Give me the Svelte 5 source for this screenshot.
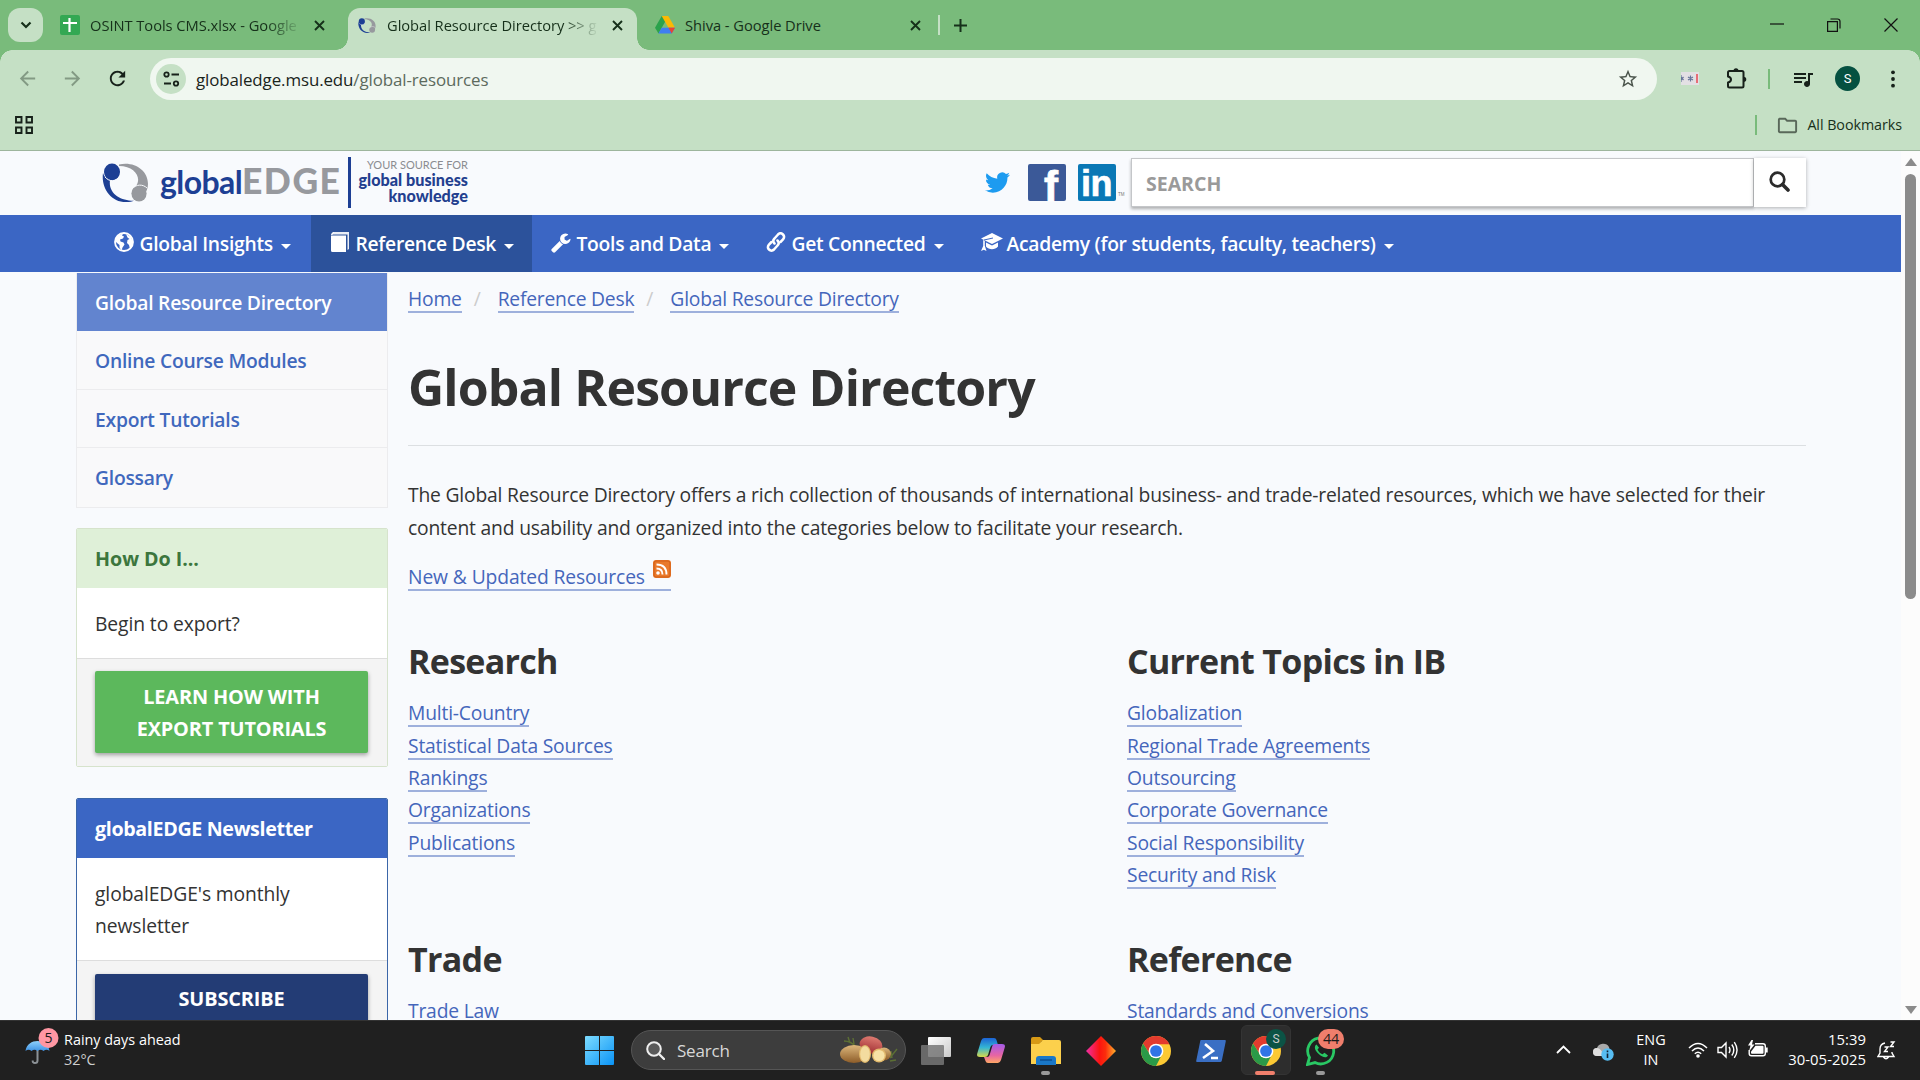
<script>
  const navItems = [
    { label: 'Global Insights', icon: 'globe' },
    { label: 'Reference Desk', icon: 'book', active: true },
    { label: 'Tools and Data', icon: 'wrench' },
    { label: 'Get Connected', icon: 'link' },
    { label: 'Academy (for students, faculty, teachers)', icon: 'cap' }
  ];
  const sideLinks = ['Global Resource Directory', 'Online Course Modules', 'Export Tutorials', 'Glossary'];
  const crumbs = ['Home', 'Reference Desk', 'Global Resource Directory'];
  const sections = [
    { title: 'Research', links: ['Multi-Country', 'Statistical Data Sources', 'Rankings', 'Organizations', 'Publications'] },
    { title: 'Current Topics in IB', links: ['Globalization', 'Regional Trade Agreements', 'Outsourcing', 'Corporate Governance', 'Social Responsibility', 'Security and Risk'] },
    { title: 'Trade', links: ['Trade Law'] },
    { title: 'Reference', links: ['Standards and Conversions'] }
  ];
</script>

{#snippet close()}
  <svg class="x" width="11" height="11" viewBox="0 0 11 11"><path d="M1 1l9 9M10 1l-9 9" stroke="#16301a" stroke-width="1.9" fill="none" /></svg>
{/snippet}

{#snippet rings(w, h)}
  <svg width={w} height={h} viewBox="0 0 47 39">
    <path d="M17 1.500C32 -2 46 7 46 21c0 4-1.500 8-4.500 11-1-4-4-7-7.500-9C40 15 33 3 17 3z" fill="#97999e" />
    <path d="M1 10C-1 24 8 39 24 39c4 0 6-.4 8-1.200C19 38 6 31 8 17 5 16 2 14 1 10z" fill="#1d3f94" />
    <ellipse cx="10" cy="9" rx="8" ry="8.500" fill="#1d3f94" />
    <ellipse cx="37" cy="30.500" rx="7.600" ry="8" fill="#97999e" />
    <path d="M3 14c4 5 11 5 15-1M30 26c4-5 11-5 15-1" fill="none" stroke="#f8fafd" stroke-width="1" />
  </svg>
{/snippet}

{#snippet chrome()}
  <svg width="30" height="30" viewBox="2 2 44 44">
    <circle cx="24" cy="24" r="22" fill="#fcc934" />
    <path d="M24 14h19.600A22 22 0 0 0 4.950 13L15.300 29A10 10 0 0 1 24 14z" fill="#e33b2e" />
    <path d="M4.950 13A22 22 0 0 0 24 46l8.700-17A10 10 0 0 1 15.300 29z" fill="#2a9a48" />
    <circle cx="24" cy="24" r="10.800" fill="#fff" />
    <circle cx="24" cy="24" r="8.600" fill="#2f74e6" />
  </svg>
{/snippet}

{#snippet navIcon(name)}
  {#if name === 'globe'}
    <svg width="20" height="20" viewBox="0 0 20 20"><circle cx="10" cy="10" r="9" fill="none" stroke="#fff" stroke-width="1.800" /><path d="M2 6l3-3 4-1.500-1 2 2 1-1 2-3 1 .5 2 3 1 1 2-2 3-1 3-2-3V13L3 11 1 9zM12 2l5 3 2 5-1 5-2 2-1-4-2-2 .5-3 2-1-2-1.500z" fill="#fff" /></svg>
  {:else if name === 'book'}
    <svg width="20" height="20" viewBox="0 0 20 20"><path d="M3.500 0H19v17l-1.500 1V2.500H2.800z" fill="#fff" opacity=".9" /><path d="M1 3.500h15V20H2.500Q1 20 1 18.500zM1 3Q1.500 0 4 0v1L2.300 3z" fill="#fff" /></svg>
  {:else if name === 'wrench'}
    <svg width="21" height="21" viewBox="60 0 1792 1792"><path fill="#fff" d="M1092 1052l-682 682q-37 37-90 37-52 0-91-37l-106-108q-38-36-38-90 0-53 38-91l681-681q39 98 114.500 173.500t173.500 114.500zm634-435q0 39-23 106-47 134-164.500 217.500t-258.500 83.500q-185 0-316.500-131.500t-131.500-316.500 131.500-316.500 316.500-131.500q58 0 121.500 16.500t107.500 46.500q16 11 16 28t-16 28l-293 169v224l193 107q5-3 79-48.500t135.500-81 70.500-35.500q15 0 23.500 10t8.500 25z" /></svg>
  {:else if name === 'link'}
    <svg width="20" height="20" viewBox="0 0 20 20"><g fill="none" stroke="#fff" stroke-width="2.500" stroke-linecap="round"><path d="M8.500 11.500C6.500 9.500 7 8 8.500 6.500l3.500-4c1.500-1.500 3.500-1.500 5 0s1.300 3.300 0 5L14.500 10" /><path d="M11.500 8.500c2 2 1.500 3.500 0 5l-3.500 4c-1.500 1.500-3.500 1.500-5 0s-1.300-3.300 0-5L5.500 10" /></g></svg>
  {:else}
    <svg width="22" height="20" viewBox="0 0 22 20"><path d="M0 6.500L11 1l11 5.500L11 12z M5 10.500l6 3 6-3v4c-3 3.500-9 3.500-12 0z M2.200 8l1.600.7v5l1.700 5.300-2.700-1.200L0 19l2.200-5z" fill="#fff" /><path d="M3 8l9-2" stroke="#3b66c4" stroke-width="1" /></svg>
  {/if}
{/snippet}

<div class="screen">
  <header class="tabs">
    <div class="chev"><svg width="12" height="8" viewBox="0 0 12 8"><path d="M1.500 1.500L6 6l4.500-4.500" fill="none" stroke="#16301a" stroke-width="2.200" /></svg></div>
    <div class="tab first">
      <svg class="fav" width="20" height="20" viewBox="0 0 20 20"><rect width="20" height="20" rx="2" fill="#33a853" /><path d="M9.500 3v14M3 8h14" stroke="#fff" stroke-width="2.200" /></svg>
      <span class="fade">OSINT Tools CMS.xlsx - Google</span>
      {@render close()}
    </div>
    <div class="tab active">
      <span class="fav">{@render rings(18, 15)}</span>
      <span class="fade">Global Resource Directory &gt;&gt; g</span>
      {@render close()}
    </div>
    <div class="tab third">
      <svg class="fav" width="20" height="18" viewBox="0 0 20 18"><path d="M6.700 0h6.600L10 6 3.500 17.500 0 11.800z" fill="#2ba24c" /><path d="M6.700 0h6.600L20 11.800h-6.500z" fill="#fbb904" /><path d="M3.400 17.500L6.700 11.800H20l-3.300 5.700z" fill="#3f7ef0" /><path d="M13.500 11.800H20l-3.300 5.700z" fill="#e94335" /></svg>
      <span>Shiva - Google Drive</span>
      {@render close()}
    </div>
    <i class="tabsep"></i>
    <svg class="plus" width="13" height="13" viewBox="0 0 13 13"><path d="M6.500 0v13M0 6.500h13" stroke="#16301a" stroke-width="2" /></svg>
    <div class="win">
      <svg width="14" height="14" viewBox="0 0 14 14"><path d="M0 6h14" stroke="#111" stroke-width="1.200" /></svg>
      <svg width="14" height="14" viewBox="0 0 14 14"><path d="M.6 3.600h9.800v9.800H.6zM3.500 1h7q2.500 0 2.500 2.500v7" fill="none" stroke="#111" stroke-width="1.200" /></svg>
      <svg width="14" height="14" viewBox="0 0 14 14"><path d="M.5.5l13 13M13.500.5l-13 13" stroke="#111" stroke-width="1.200" /></svg>
    </div>
  </header>

  <div class="toolbar">
    <svg class="back" width="23" height="23" viewBox="0 0 24 24"><path fill="#839a84" d="M20 11H7.830l5.590-5.590L12 4l-8 8 8 8 1.410-1.410L7.830 13H20v-2z" /></svg>
    <svg class="fwd" width="23" height="23" viewBox="0 0 24 24"><path fill="#839a84" d="M4 11h12.170l-5.590-5.590L12 4l8 8-8 8-1.410-1.410L16.170 13H4v-2z" /></svg>
    <svg class="reload" width="23" height="23" viewBox="0 0 24 24"><path fill="#17211a" d="M17.650 6.350C16.200 4.900 14.210 4 12 4c-4.420 0-7.990 3.580-7.990 8s3.570 8 7.990 8c3.730 0 6.840-2.550 7.730-6h-2.080c-.82 2.330-3.040 4-5.650 4-3.310 0-6-2.690-6-6s2.690-6 6-6c1.660 0 3.140.69 4.220 1.780L13 11h7V4l-2.350 2.350z" /></svg>
    <div class="omnibox">
      <span class="site"><svg width="17" height="16" viewBox="0 0 17 16"><g fill="none" stroke="#17211a" stroke-width="1.800"><circle cx="3.500" cy="3.500" r="2.200" /><path d="M8.500 3.500H16M1 12.500h7" /><circle cx="13" cy="12.500" r="2.200" /></g></svg></span>
      <span class="url">globaledge.msu.edu<em>/global-resources</em></span>
      <svg class="star" width="22" height="22" viewBox="0 0 24 24"><path fill="#4a544b" d="M22 9.240l-7.190-.62L12 2 9.190 8.630 2 9.240l5.460 4.730L5.820 21 12 17.270 18.180 21l-1.630-7.030L22 9.240zM12 15.400l-3.760 2.270 1-4.280-3.320-2.880 4.380-.38L12 6.100l1.710 4.040 4.380.38-3.320 2.880 1 4.280L12 15.400z" /></svg>
    </div>
    <svg class="ext" width="18" height="13" viewBox="0 0 18 13"><rect width="18" height="13" fill="#e3e0e4" /><path d="M0 3v7M0 5l2.500 3M2.500 5L0 8M9.500 3.500v6M7 5l5 3M12 5L7 8" fill="none" stroke="#68769a" stroke-width="1.200" /><path d="M16 2v9" stroke="#e8505b" stroke-width="1.600" /></svg>
    <svg class="puzzle" width="23" height="23" viewBox="0 0 23 23"><path d="M3 5.500Q3 4 4.500 4H17q1.500 0 1.500 1.500V19q0 1.500-1.500 1.500H4.500Q3 20.500 3 19v-3.500q3-.6 3-3t-3-3z" fill="none" stroke="#17211a" stroke-width="2" stroke-linejoin="round" /><path d="M8.500 4a2.500 2.800 0 0 1 5 0zM18.500 9.700a2.800 2.600 0 0 1 0 5.200z" fill="#17211a" /></svg>
    <i class="sep"></i>
    <svg class="music" width="24" height="24" viewBox="0 0 24 24"><path fill="#17211a" d="M15 6H3v2h12V6zm0 4H3v2h12v-2zM3 16h8v-2H3v2zM17 6v8.180c-.31-.11-.65-.18-1-.18-1.660 0-3 1.340-3 3s1.340 3 3 3 3-1.340 3-3V8h3V6h-5z" /></svg>
    <span class="avatar">S</span>
    <svg class="dots" width="4" height="18" viewBox="0 0 4 18"><g fill="#17211a"><circle cx="2" cy="2.300" r="1.900" /><circle cx="2" cy="9" r="1.900" /><circle cx="2" cy="15.700" r="1.900" /></g></svg>
  </div>

  <div class="bookmarks">
    <svg width="18" height="18" viewBox="0 0 18 18"><path d="M1 1h5.500v5.500H1zM11.500 1H17v5.500h-5.500zM1 11.500h5.500V17H1zM11.500 11.500H17V17h-5.500z" fill="none" stroke="#17211a" stroke-width="1.900" /></svg>
    <i class="sep"></i>
    <svg class="folder" width="25" height="23" viewBox="0 0 24 24"><path fill="#59685a" d="M9.170 6l2 2H20v10H4V6h5.170M10 4H4c-1.100 0-1.990.9-1.990 2L2 18c0 1.100.9 2 2 2h16c1.100 0 2-.9 2-2V8c0-1.100-.9-2-2-2h-8l-2-2z" /></svg>
    <span>All Bookmarks</span>
  </div>

  <div class="viewport">
    <div class="page">
      <div class="brandbar">
        <span class="logo-mark">{@render rings(47, 39)}</span>
        <div class="logo-text">global<b>EDGE</b></div>
        <div class="tagline"><small>YOUR SOURCE FOR</small><strong>global business</strong><strong>knowledge</strong></div>
        <div class="social">
          <svg class="tw" width="25" height="25" viewBox="0 0 24 24"><path fill="#1d9bf0" d="M23.953 4.570a10 10 0 01-2.825.775 4.958 4.958 0 002.163-2.723c-.951.555-2.005.959-3.127 1.184a4.920 4.920 0 00-8.384 4.482C7.690 8.095 4.067 6.130 1.640 3.162a4.822 4.822 0 00-.666 2.475c0 1.710.87 3.213 2.188 4.096a4.904 4.904 0 01-2.228-.616v.06a4.923 4.923 0 003.946 4.827 4.996 4.996 0 01-2.212.085 4.936 4.936 0 004.604 3.417 9.867 9.867 0 01-6.102 2.105c-.39 0-.779-.023-1.170-.067a13.995 13.995 0 007.557 2.209c9.053 0 13.998-7.496 13.998-13.985 0-.21 0-.42-.015-.63A9.935 9.935 0 0024 4.590z" /></svg>
          <svg class="fb" width="38" height="37" viewBox="0 0 38 37"><rect width="38" height="37" rx="2" fill="#3b5998" /><text x="16" y="36.600" font-size="42" font-weight="700" font-family="Liberation Sans, sans-serif" fill="#fff" stroke="#fff" stroke-width=".8">f</text></svg>
          <svg class="li" width="48" height="37" viewBox="0 0 48 37"><rect width="38" height="37" rx="2" fill="#0a78b5" /><text x="3" y="32" font-size="36" font-weight="700" font-family="Liberation Sans, sans-serif" letter-spacing="-.6" fill="#fff" stroke="#fff" stroke-width=".6">in</text><text x="40" y="32" font-size="4.500" font-family="Liberation Sans, sans-serif" fill="#777">TM</text></svg>
        </div>
        <div class="search"><span>SEARCH</span></div>
        <div class="searchbtn"><svg width="21" height="21" viewBox="0 0 21 21"><circle cx="8.500" cy="8.500" r="6.800" fill="none" stroke="#2b2b2b" stroke-width="2.700" /><path d="M13.500 13.500l5.500 5.500" stroke="#2b2b2b" stroke-width="3.600" stroke-linecap="round" /></svg></div>
      </div>

      <nav>
        {#each navItems as item}
          <div class="navitem" class:current={item.active}>
            <span class="ico">{@render navIcon(item.icon)}</span><span>{item.label}</span><i class="caret"></i>
          </div>
        {/each}
      </nav>

      <div class="cols">
        <aside>
          <ul class="sidenav">
            {#each sideLinks as label, i}
              <li class:on={i === 0}>{label}</li>
            {/each}
          </ul>
          <section class="panel howto">
            <h3>How Do I...</h3>
            <p>Begin to export?</p>
            <footer><div class="btn">LEARN HOW WITH<br />EXPORT TUTORIALS</div></footer>
          </section>
          <section class="panel news">
            <h3>globalEDGE Newsletter</h3>
            <p>globalEDGE's monthly<br />newsletter</p>
            <footer><div class="btn">SUBSCRIBE</div></footer>
          </section>
        </aside>

        <main>
          <div class="crumbs">
            {#each crumbs as c, i}
              {#if i}<span class="slash">/</span>{/if}<a href="#top">{c}</a>
            {/each}
          </div>
          <h1>Global Resource Directory</h1>
          <p class="intro">The Global Resource Directory offers a rich collection of thousands of international business- and trade-related resources, which we have selected for their<br />content and usability and organized into the categories below to facilitate your research.</p>
          <div class="updated">
            <a href="#top">New &amp; Updated Resources<svg width="18" height="18" viewBox="0 0 18 18"><rect width="18" height="18" rx="3" fill="#e9792b" /><rect x="1" y="1" width="16" height="16" rx="2" fill="none" stroke="#d25f16" /><circle cx="5" cy="13" r="1.800" fill="#fff" /><path d="M3.500 8.500q6 0 6 6M3.500 4.500q10 0 10 10" fill="none" stroke="#fff" stroke-width="1.900" /></svg></a>
          </div>
          <div class="sections">
            {#each sections as s}
              <section>
                <h2>{s.title}</h2>
                {#each s.links as l}
                  <div class="row"><a href="#top">{l}</a></div>
                {/each}
              </section>
            {/each}
          </div>
        </main>
      </div>
    </div>
    <div class="scroll"><i class="up"></i><i class="thumb"></i><i class="down"></i></div>
  </div>

  <div class="taskbar">
    <div class="weather">
      <svg width="36" height="38" viewBox="0 0 36 38"><defs><linearGradient id="um" x1="0" y1="0" x2="0" y2="1"><stop offset="0" stop-color="#8ed0fb" /><stop offset="1" stop-color="#3f93e4" /></linearGradient></defs><path d="M13.500 22v11.500q0 2.500-2.500 2.500t-2.300-2.500" fill="none" stroke="#8c9196" stroke-width="2" /><path d="M1.500 24C2.500 17 8 14 13.500 14s11 3 12 10q-3-2.500-6 0-3-2.500-6 0-3-2.500-6 0-3-2.500-6 0z" fill="url(#um)" /><circle cx="24.500" cy="11" r="10" fill="#ff97a3" /><text x="24.500" y="16" text-anchor="middle" font-size="14" font-family="Open Sans, sans-serif" fill="#1a1a1a">5</text></svg>
      <div><span>Rainy days ahead</span><span class="dim">32°C</span></div>
    </div>
    <div class="apps">
      <svg class="start" width="29" height="29" viewBox="0 0 29 29"><defs><linearGradient id="wg" x1="0" y1="0" x2="1" y2="1"><stop offset="0" stop-color="#7ddcff" /><stop offset="1" stop-color="#0a93f5" /></linearGradient></defs><path d="M1 0h13v14H0V1q0-1 1-1zM15 0h13q1 0 1 1v13H15zM0 15h14v14H1q-1 0-1-1zM15 15h14v13q0 1-1 1H15z" fill="url(#wg)" /></svg>
      <div class="pill">
        <svg width="19" height="19" viewBox="0 0 19 19"><circle cx="8" cy="8" r="6.800" fill="#5a5a5a" stroke="#eee" stroke-width="2" /><path d="M13 13l5 5" stroke="#eee" stroke-width="2.400" stroke-linecap="round" /></svg>
        <span>Search</span>
        <svg class="veg" width="58" height="28" viewBox="0 0 58 28"><defs><linearGradient id="po" x1="0" y1="0" x2="0" y2="1"><stop offset="0" stop-color="#dcb77c" /><stop offset="1" stop-color="#8d5c28" /></linearGradient><linearGradient id="rp" x1="0" y1="0" x2="0" y2="1"><stop offset="0" stop-color="#dd7a70" /><stop offset="1" stop-color="#a02f33" /></linearGradient></defs><g stroke="#5c6f34" stroke-width="1.400" fill="none"><path d="M4 5q7 0 12 6M8 1l2 6M13 2l1 6M50 22q3-4 7-9M51 15l1 7M50 25l6-1" /></g><ellipse cx="31" cy="9" rx="11.500" ry="8.500" transform="rotate(12 31 9)" fill="url(#rp)" /><ellipse cx="14" cy="18" rx="14" ry="9" fill="url(#po)" /><ellipse cx="44" cy="18" rx="7" ry="6.500" fill="url(#po)" /><ellipse cx="25" cy="18" rx="6" ry="9" fill="#e2b96c" /><ellipse cx="25" cy="18" rx="4.800" ry="7.800" fill="#f3dc9f" /><ellipse cx="39" cy="19.500" rx="7" ry="7" fill="#e2b96c" /><ellipse cx="39" cy="19.500" rx="5.600" ry="5.600" fill="#f7e2a6" /></svg>
      </div>
      <div class="slot"><svg width="30" height="28" viewBox="0 0 30 28"><defs><linearGradient id="tv" x1="0" y1="0" x2="1" y2="1"><stop offset="0" stop-color="#fff" /><stop offset="1" stop-color="#c9c9c9" /></linearGradient></defs><rect x="7" width="23" height="20" rx="1" fill="url(#tv)" /><rect y="8" width="23" height="20" rx="1" fill="#777" opacity=".85" /></svg></div>
      <div class="slot"><svg width="28" height="25" viewBox="0 0 28 25"><defs><linearGradient id="ca" x1="0" y1="0" x2="0" y2="1"><stop offset="0" stop-color="#1c63d6" /><stop offset=".5" stop-color="#34b5d4" /><stop offset="1" stop-color="#d7d94a" /></linearGradient><linearGradient id="cb" x1="0" y1="0" x2="0" y2="1"><stop offset="0" stop-color="#a45bea" /><stop offset=".6" stop-color="#e765a3" /><stop offset="1" stop-color="#ffa765" /></linearGradient></defs><path d="M7 0h10q2 0 2.500 2l1.500 5h-5q-2 0-2.600 2L11 17q-.6 2-3 2H3q-4 0-2.600-4L4 3Q5 0 7 0z" fill="url(#ca)" /><path d="M21 25H11q-2 0-2.500-2L7 19h3q2 0 2.600-2L15 9q.6-3 3-3h7q4 0 2.600 4L24 22q-1 3-3 3z" fill="url(#cb)" /></svg></div>
      <div class="slot"><svg width="30" height="28" viewBox="0 0 30 28"><path d="M0 2q0-2 2-2h7l4 4h-2L8 8H0z" fill="#d79a16" /><path d="M0 7h8l4-4h16q2 0 2 2v22H0z" fill="#fcd04c" /><path d="M5 28v-6q0-3 3-3h14q3 0 3 3v6z" fill="#1a78c8" /><path d="M9 23h12" stroke="#0d4f93" stroke-width="1.500" /></svg><i class="dot"></i></div>
      <div class="slot"><svg width="30" height="30" viewBox="0 0 30 30"><defs><linearGradient id="dg"><stop offset="0" stop-color="#f02fa5" /><stop offset=".45" stop-color="#fb1410" /><stop offset=".65" stop-color="#fb2d0c" /><stop offset="1" stop-color="#ffb22c" /></linearGradient></defs><path d="M15 0l15 15-15 15L0 15z" fill="url(#dg)" /></svg></div>
      <div class="slot">{@render chrome()}</div>
      <div class="slot"><svg width="30" height="22" viewBox="0 0 30 22"><path d="M5 0h24q1 0 .8 1.200l-4 19.500Q25.500 22 24 22H1Q0 22 .2 20.800l4-19.600Q4.400 0 5 0z" fill="#3a6fc4" /><path d="M9 4l8 7-10 7M15 18h7" fill="none" stroke="#fff" stroke-width="2.600" /></svg></div>
      <div class="slot hot">{@render chrome()}<span class="sbadge">S</span><i class="dot wide"></i></div>
      <div class="slot"><svg width="30" height="30" viewBox="0 0 30 30"><path d="M1.500 28.500l2-7A13 13 0 1 1 9 26.600z" fill="#202020" stroke="#29c864" stroke-width="2.800" /><path d="M10.500 8.500c-3 2-1.500 6 2 9.300s8 5 9.500 1.700l-3.500-2.700-2 1.500c-2.300-1-4-2.500-5-4.800l1.500-1.700z" fill="#29c864" /></svg><span class="cbadge">44</span><i class="dot"></i></div>
    </div>
    <div class="tray">
      <svg class="t1" width="15" height="9" viewBox="0 0 15 9"><path d="M1 8l6.500-6.500L14 8" fill="none" stroke="#fff" stroke-width="1.800" /></svg>
      <svg class="t2" width="21" height="18" viewBox="0 0 21 18"><path d="M4 13a4 4 0 0 1 0-8A6.500 6 0 0 1 16 4l2 9z" fill="#a9a9a9" /><path d="M4 13a4 4 0 0 1 0-8q4 0 7 8z" fill="#dedede" /><circle cx="14.500" cy="11.500" r="6.200" fill="#57bdf2" /><path d="M14.500 10.500v4.500M14.500 7.600v1.600" stroke="#123" stroke-width="1.600" /></svg>
      <div class="lang"><span>ENG</span><span>IN</span></div>
      <svg class="t3" width="20" height="16" viewBox="0 0 20 16"><g fill="none" stroke="#fff" stroke-width="1.500"><path d="M1 6q9-9 18 0M4 9q6-6 12 0M6.800 11.800q3.200-3 6.400 0" /></g><circle cx="10" cy="14" r="1.800" fill="#fff" /></svg>
      <svg class="t4" width="21" height="18" viewBox="0 0 21 18"><path d="M1 6.500h3.500L9 2v14l-4.500-4.500H1zM12 6q2 3 0 6M14.800 3.500q4 5.500 0 11M17.300 1.200q5.500 8 0 15.600" fill="none" stroke="#fff" stroke-width="1.400" /></svg>
      <svg class="t5" width="20" height="17" viewBox="0 0 20 17"><path d="M7 3.700h8q2.300 0 2.300 2.300v7.500q0 2.300-2.300 2.300H3.500q-2.300 0-2.300-2.300V10" fill="none" stroke="#fff" stroke-width="1.400" /><path d="M7.500 5.700h7q1 0 1 1v6q0 1-1 1H4q-1 0-1-1v-1z" fill="#fff" /><path d="M18.800 7.500v5" stroke="#fff" stroke-width="1.800" /><path d="M3.500 0L0 5.500h2.500L1 11.500l5.500-7H4L5 0z" fill="#fff" /></svg>
      <div class="clock"><span>15:39</span><span>30-05-2025</span></div>
      <svg class="t6" width="19" height="19" viewBox="0 0 19 19"><path d="M8 2Q3 3 3 8v4l-2 3.500h16L15 12v-1M6.500 16q2.500 3.500 5 0" fill="none" stroke="#fff" stroke-width="1.400" /><path d="M7.500 6H11l-3.500 4.500H11M13.500 1H17l-3.500 4.500H17" fill="none" stroke="#fff" stroke-width="1.400" /></svg>
    </div>
  </div>
</div>

<style>
  :global(body) { margin: 0; overflow: hidden; }
  .screen { width: 1920px; height: 1080px; display: flex; flex-direction: column; overflow: hidden; background: #c5e0c5; font-family: "Open Sans", "Noto Sans", sans-serif; color: #333; }
  .screen * { box-sizing: border-box; }
  svg { display: block; flex: none; }
  span, a { white-space: nowrap; }

  .tabs { height: 50px; flex: none; background: #79bb7b; display: flex; align-items: center; padding-left: 8px; font-size: 14.700px; letter-spacing: -.04px; color: #16301a; }
  .chev { width: 35px; height: 34px; border-radius: 12px; background: #c5e0c5; display: grid; place-items: center; }
  .tab { display: flex; align-items: center; height: 42px; align-self: flex-end; padding-bottom: 8px; position: relative; }
  .tab .fav { margin-right: 10px; }
  .tab .x { margin-left: auto; }
  .first { width: 305px; padding-left: 17px; padding-right: 23px; }
  .active { width: 289px; background: #c5e0c5; border-radius: 12px 12px 0 0; padding-left: 10px; padding-right: 14px; }
  .active .fav { margin-right: 11px; }
  .active::before, .active::after { content: ""; position: absolute; bottom: 0; width: 12px; height: 12px; }
  .active::before { left: -12px; background: radial-gradient(circle at 0 0, transparent 11.500px, #c5e0c5 12px); }
  .active::after { right: -12px; background: radial-gradient(circle at 100% 0, transparent 11.500px, #c5e0c5 12px); }
  .third { width: 301px; padding-left: 18px; padding-right: 17px; }
  .fade { overflow: hidden; width: 210px; mask-image: linear-gradient(90deg, #000 84%, transparent 101%); }
  .tabsep { width: 2px; height: 20px; background: #c5e0c5; }
  .plus { margin-left: 14px; }
  .win { margin-left: auto; display: flex; gap: 43px; padding-right: 22px; }

  .toolbar { height: 58px; flex: none; display: flex; align-items: center; padding-bottom: 1px; background: radial-gradient(circle at 12px 12px, #c5e0c5 11.500px, #79bb7b 12px) 0 0 / 12px 12px no-repeat, radial-gradient(circle at 0 12px, #c5e0c5 11.500px, #79bb7b 12px) 100% 0 / 12px 12px no-repeat, #c5e0c5; }
  .back { margin-left: 16px; }
  .fwd { margin-left: 22px; }
  .reload { margin-left: 22px; }
  .omnibox { margin: 1px 0 0 21px; width: 1507px; height: 42px; border-radius: 21px; background: #f0f7f0; display: flex; align-items: center; padding: 0 18px 0 6px; }
  .site { width: 30px; height: 30px; border-radius: 50%; background: #c5e0c5; display: grid; place-items: center; }
  .url { margin-left: 10px; font-size: 16.900px; letter-spacing: -.1px; color: #1a241b; }
  .url em { font-style: normal; color: #5c6a5d; }
  .star { margin-left: auto; }
  .ext { margin-left: 24px; }
  .puzzle { margin-left: 26px; }
  .sep { width: 2px; height: 20px; background: #79bb7b; }
  .toolbar .sep { margin-left: 20px; }
  .music { margin-left: 21px; }
  .avatar { margin-left: 20px; width: 25px; height: 25px; border-radius: 50%; background: #055141; color: #fff; font: 13px/25px Roboto, sans-serif; text-align: center; }
  .dots { margin-left: 31px; }

  .bookmarks { height: 43px; flex: none; border-bottom: 1px solid #9db59d; display: flex; align-items: center; padding: 0 18px 8px 15px; font-size: 14.300px; letter-spacing: -.05px; color: #17301a; }
  .bookmarks .sep { margin-left: auto; }
  .bookmarks span { margin-top: -2px; }
  .folder { margin: 0 7px 0 18px; }

  .viewport { height: 869px; flex: none; display: flex; background: #f8fafd; overflow: hidden; }
  .page { width: 1901px; }
  .scroll { width: 19px; background: #fcfcfc; display: flex; flex-direction: column; align-items: center; padding: 7px 0 6px; }
  .up, .down { border: 6.500px solid transparent; border-top: 0; border-bottom: 8px solid #8b8b8b; }
  .down { border-bottom: 0; border-top: 8px solid #8b8b8b; margin-top: auto; }
  .thumb { width: 11px; height: 425px; margin-top: 8px; background: #8b8b8b; border-radius: 6px; }

  .brandbar { height: 64px; display: flex; align-items: flex-start; padding-left: 102px; }
  .logo-mark { margin-top: 12px; }
  .logo-text { width: 188px; margin-left: 11px; font: 700 32px/40px Lato, sans-serif; color: #1d3f94; padding-top: 10px; letter-spacing: -.6px; white-space: nowrap; }
  .logo-text b { font-weight: 900; font-size: 35.500px; color: #97999e; letter-spacing: 1.500px; }
  .tagline { margin-top: 6px; height: 51px; border-left: 3px solid #1d3f94; width: 120px; text-align: right; font-family: Lato, sans-serif; color: #233f8f; line-height: 16px; }
  .tagline small { display: block; font-size: 11px; line-height: 15px; color: #8a8c90; white-space: nowrap; }
  .tagline strong { display: block; font-size: 16.200px; font-weight: 900; white-space: nowrap; }
  .social { margin-left: auto; display: flex; align-items: flex-start; }
  .social svg { overflow: visible; }
  .tw { margin-top: 19px; }
  .fb { margin: 13px 12px 0 18px; }
  .li { margin-top: 13px; }
  .search { margin: 7px 0 0 5px; width: 623px; height: 49px; background: #fff; border: 1px solid #c4c6c9; box-shadow: 0 2px 3px rgba(0, 0, 0, .3); padding-left: 14px; font-weight: 700; font-size: 19.500px; line-height: 50px; color: #9a9a9a; letter-spacing: 0; }
  .searchbtn { margin: 7px 95px 0 0; width: 52px; height: 49px; background: #fff; display: grid; place-items: center; box-shadow: 0 1px 4px rgba(0, 0, 0, .3); padding: 0 2px 2px 0; }

  nav { height: 57px; background: #3b66c4; display: grid; grid-template-columns: 216px 221px 215px 215px 460px; padding-left: 95px; color: #fff; font-weight: 600; font-size: 19.300px; letter-spacing: -.28px; }
  .navitem { display: flex; align-items: center; padding-left: 19px; }
  .current { background: #2c529b; }
  .ico { width: 25.500px; margin-top: -3px; }
  .caret { border: 5px solid transparent; border-top-color: #fff; border-bottom: 0; margin: 5px 0 0 8px; }

  .cols { display: flex; padding-left: 76px; }
  aside { width: 312px; margin-right: 20px; padding-top: 1px; }
  .sidenav { list-style: none; margin: 0; padding: 0; border: 1px solid #ececee; border-top: 0; background: #f9f9fa; }
  .sidenav li { height: 58.400px; line-height: 59px; padding-left: 18px; border-bottom: 1px solid #ececee; font-weight: 600; font-size: 19.300px; letter-spacing: -.23px; color: #4068bd; }
  .sidenav li:last-child { border-bottom: 0; }
  .sidenav .on { background: #6284cf; color: #fff; border-color: #6284cf; }
  .panel { border: 1px solid #d6e3cc; background: #fff; border-radius: 2px; overflow: hidden; }
  .panel h3 { margin: 0; height: 59px; padding-left: 18px; font-size: 19.700px; line-height: 60px; letter-spacing: -.2px; }
  .panel p { margin: 0; padding: 20px 0 18px 18px; font-size: 19.300px; line-height: 32px; letter-spacing: -.1px; }
  .panel footer { background: #f4f4f4; border-top: 1px solid #ddd; padding: 12px 19px 13px 18px; }
  .btn { border-radius: 2px; color: #fff; font-weight: 700; text-align: center; font-size: 19.900px; line-height: 32px; letter-spacing: -.15px; box-shadow: 0 2px 4px rgba(0, 0, 0, .35); padding: 9px 0 8px; }
  .howto { margin-top: 20px; }
  .howto h3 { background: #dff0d8; color: #3c763d; letter-spacing: -.05px; }
  .howto .btn { background: #5cb85c; padding-top: 10px; }
  .news { margin-top: 31px; border-color: #3b66a8; }
  .news h3 { background: #3b66c4; color: #fff; letter-spacing: -.36px; }
  .news footer { padding-top: 13px; }
  .news .btn { background: #233c75; }

  main { width: 1398px; font-size: 19.300px; letter-spacing: -.19px; }
  a { color: #4566bb; text-decoration: none; border-bottom: 2px solid #9eb0dc; display: inline-block; line-height: 24px; }
  .crumbs { display: flex; padding-top: 15px; height: 61px; align-items: flex-start; letter-spacing: -.22px; }
  .slash { color: #ccc; line-height: 24px; width: 36px; padding-left: 12px; }
  h1 { margin: 0; font-size: 50px; line-height: 70px; height: 113px; padding-top: 19px; border-bottom: 1px solid #dcdfe2; letter-spacing: -.88px; color: #333; }
  .intro { margin: 0; padding-top: 33px; line-height: 32.600px; white-space: nowrap; }
  .updated { padding-top: 19px; height: 79px; letter-spacing: -.12px; }
  .updated a { display: inline-flex; line-height: 27px; height: 28px; }
  .updated svg { margin: -3px 0 0 8px; }
  .sections { display: grid; grid-template-columns: 719px 1fr; grid-template-rows: 298px auto; }
  h2 { margin: 0; font-size: 34px; line-height: 48px; height: 76px; padding-top: 14px; letter-spacing: -.7px; color: #333; }
  .row { height: 32.400px; }

  .taskbar { height: 60px; flex: none; background: #202020; border-top: 1px solid #333; display: flex; align-items: flex-start; color: #fff; font-size: 14.400px; letter-spacing: 0; }
  .weather { width: 585px; display: flex; padding-left: 24px; }
  .weather > svg { margin-top: 6px; }
  .weather div { margin: 9px 0 0 4px; line-height: 20px; }
  .weather span, .lang span, .clock span { display: block; }
  .dim { color: #cfcfcf; }
  .apps { display: flex; width: 971px; }
  .start { margin: 15px 17px 0 0; }
  .pill { margin: 9px 2px 0 0; width: 275px; height: 40px; border-radius: 20px; background: #3d3d3d; border: 1px solid #555; display: flex; align-items: center; padding: 0 7px 0 14px; font-size: 17px; letter-spacing: -.2px; color: #d8d8d8; }
  .pill span { margin-left: 12px; }
  .veg { margin-left: auto; }
  .slot { width: 55px; height: 59px; display: grid; place-items: center; position: relative; }
  .hot::before { content: ""; position: absolute; inset: 4px 2px 5px 3px; background: #2d2d2d; border-radius: 6px; border: 1px solid #343434; }
  .hot > :global(svg) { position: relative; }
  .dot { position: absolute; bottom: 5px; left: 23px; width: 9px; height: 4px; border-radius: 2px; background: #999; }
  .wide { left: 17px; width: 20px; background: #f07f6c; }
  .sbadge, .cbadge { position: absolute; border-radius: 10px; text-align: center; }
  .sbadge { left: 28px; top: 8px; width: 20px; height: 20px; background: #0b5345; font: 12px/20px Roboto, sans-serif; color: #ccc; }
  .cbadge { left: 25px; top: 8px; width: 26px; height: 20px; background: #ef7e6c; color: #1a1a1a; line-height: 20px; letter-spacing: -.3px; }
  .tray { display: flex; align-items: flex-start; }
  .t1 { margin: 24px 0 0 0; }
  .t2 { margin: 22px 0 0 22px; }
  .lang { margin: 9px 0 0 19px; width: 36px; text-align: center; line-height: 20px; }
  .t3 { margin: 21px 0 0 19px; }
  .t4 { margin: 20px 0 0 9px; }
  .t5 { margin: 19px 0 0 10px; }
  .clock { margin-top: 9px; width: 98px; text-align: right; line-height: 19.500px; font-size: 14.800px; letter-spacing: .05px; }
  .t6 { margin: 20px 0 0 11px; }
</style>
